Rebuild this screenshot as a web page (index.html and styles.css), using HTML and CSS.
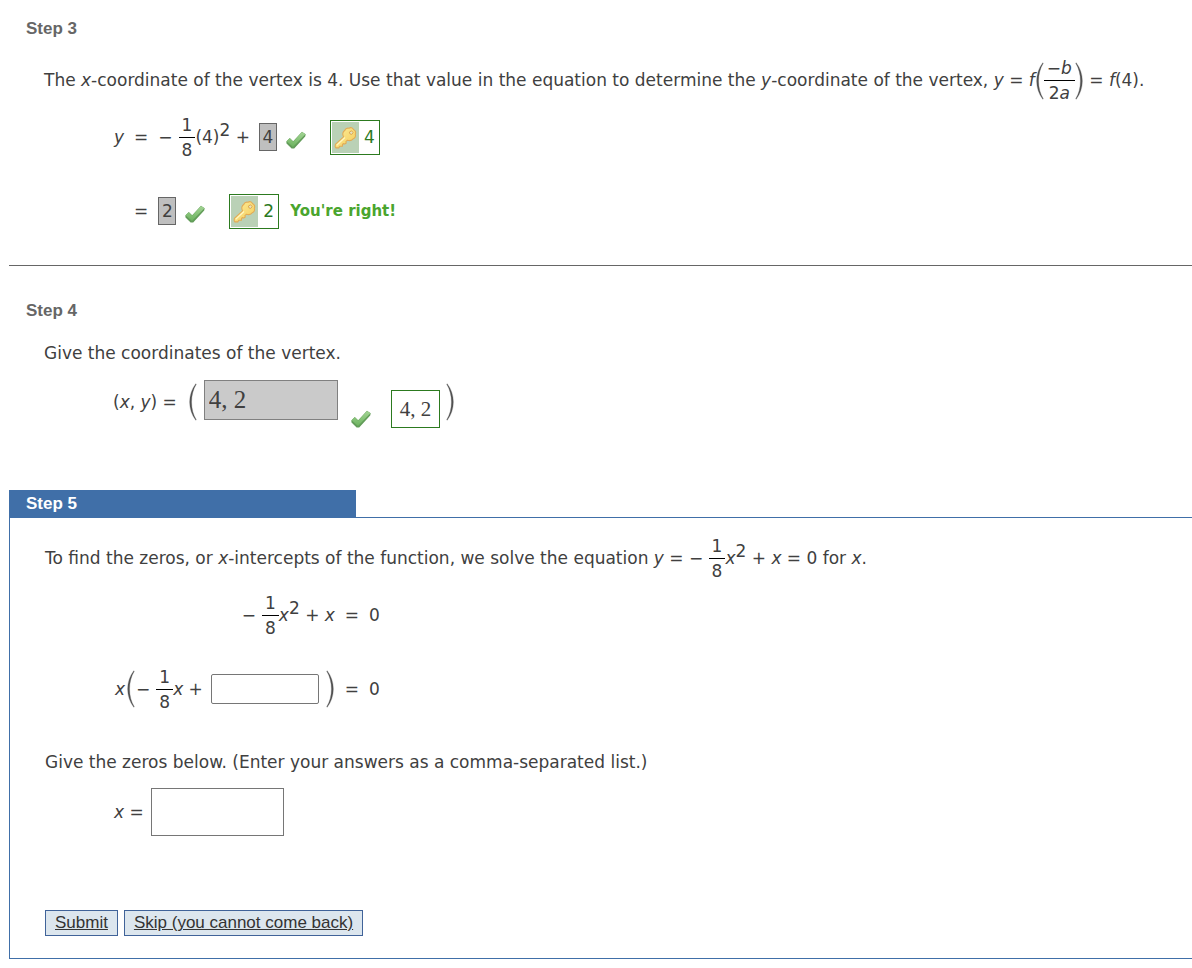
FILE: index.html
```
<!DOCTYPE html>
<html lang="en">
<head>
    <meta charset="UTF-8">
    <meta name="viewport" content="width=device-width, initial-scale=1.0">
    <title>Quadratic Function Tutorial</title>
    <link rel="stylesheet" href="styles.css">
</head>
<body>
    <svg class="sprites" aria-hidden="true">
        <defs>
            <linearGradient id="checkFill" x1="0" y1="0" x2="0" y2="1">
                <stop offset="0" stop-color="#a3d494"/>
                <stop offset="1" stop-color="#6cb35f"/>
            </linearGradient>
            <linearGradient id="keyFill" x1="0" y1="0" x2="1" y2="1">
                <stop offset="0" stop-color="#fdee9c"/>
                <stop offset="1" stop-color="#f4cb58"/>
            </linearGradient>
        </defs>
        <symbol id="check" viewBox="0 0 20 18">
            <path d="M.3 10.4 L3.8 7 L7.2 10.2 L16 .8 L19.7 3.2 L19.2 5.6 L8.2 17.6 L5.6 17.6 L.5 12.4 Z" fill="#629c59"/>
            <path d="M.6 10.2 L3.8 7.3 L7.2 10.7 L16 1.1 L19.4 3.3 L7 15.9 Z" fill="url(#checkFill)"/>
        </symbol>
        <symbol id="key" viewBox="0 0 24 24">
            <path d="M10 11.4 C8.6 8.6 9.4 5.8 11.4 4.4 C12 2.6 14 1.8 15.6 2.4 C17.2 1 19.6 1.8 20.2 3.6 C22.4 4.4 23.2 6.8 22.2 8.6 C23 10.6 22 12.8 20 13.4 C18.4 15.2 16 15.6 14 14.8 L12.4 16.2 L12.8 17.8 L11.2 18.8 L9.6 18.4 L8.8 19.4 L8.8 21 L6 21.2 L5 22.8 L2 22.8 L1.2 21.6 L1.4 19.2 Z" fill="url(#keyFill)" stroke="#e2ab55" stroke-width="1.1" stroke-linejoin="round"/>
            <path d="M2.8 20.2 L11.4 12" stroke="#fff8c4" stroke-width="1.3" fill="none"/>
            <path d="M16 6.4 L18.4 5 L20 7 L18.4 8.8 L16.6 8.2 Z" fill="#e6e2c0" stroke="#d99f48" stroke-width=".9"/>
        </symbol>
        <symbol id="paren" viewBox="0 0 9 40" preserveAspectRatio="none">
            <path d="M7.8 .8 C-.4 12 -.4 28 7.8 39.2 L8.3 38.8 C2 28 2 12 8.3 1.2 Z" fill="#505050" stroke="#606060" stroke-width=".3"/>
        </symbol>
    </svg>

    <section class="step">
        <h2>Step 3</h2>
        <p class="text tall">The <i>x</i>-coordinate of the vertex is 4. Use that value in the equation to determine the <i>y</i>-coordinate of the vertex, <i>y</i> = <i>f</i><span class="group"><svg class="paren"><use href="#paren"/></svg><span class="fraction"><span>−<i>b</i></span><span>2<i>a</i></span></span><svg class="paren close"><use href="#paren"/></svg></span> = <i>f</i>(4).</p>
        <div class="equations">
            <span class="lhs"><i>y</i></span>
            <span>=</span>
            <span class="math">
                <span>−</span>
                <span class="fraction lead"><span>1</span><span>8</span></span>
                <span>(4)<sup>2</sup> +</span>
                <input class="answered" type="text" value="4" aria-label="Constant term" readonly>
                <svg class="check"><use href="#check"/></svg>
                <span class="answer-key"><svg class="key"><use href="#key"/></svg><span>4</span></span>
            </span>
            <span></span>
            <span>=</span>
            <span class="math">
                <input class="answered first" type="text" value="2" aria-label="Value of y" readonly>
                <svg class="check"><use href="#check"/></svg>
                <span class="answer-key"><svg class="key"><use href="#key"/></svg><span>2</span></span>
                <strong class="feedback">You're right!</strong>
            </span>
        </div>
    </section>

    <section class="step divided">
        <h2>Step 4</h2>
        <p class="text">Give the coordinates of the vertex.</p>
        <div class="vertex">
            <label for="vertex">(<i>x</i>, <i>y</i>) =</label>
            <svg class="paren"><use href="#paren"/></svg>
            <input id="vertex" class="vertex-answer" type="text" value="4, 2" readonly>
            <svg class="check"><use href="#check"/></svg>
            <span class="vertex-key">4, 2</span>
            <svg class="paren close"><use href="#paren"/></svg>
        </div>
    </section>

    <section class="current">
        <h2>Step 5</h2>
        <form class="panel">
            <p class="text tall">To find the zeros, or <i>x</i>-intercepts of the function, we solve the equation <i>y</i> = − <span class="fraction"><span>1</span><span>8</span></span><i>x</i><sup>2</sup> + <i>x</i> = 0 for <i>x</i>.</p>
            <div class="equations">
                <span class="math lhs">
                    <span>−</span>
                    <span class="fraction lead"><span>1</span><span>8</span></span>
                    <span><i>x</i><sup>2</sup> + <i>x</i></span>
                </span>
                <span>=</span>
                <span>0</span>
                <span class="math lhs">
                    <i>x</i>
                    <svg class="paren"><use href="#paren"/></svg>
                    <span>−</span>
                    <span class="fraction lead"><span>1</span><span>8</span></span>
                    <label for="term"><i>x</i> +</label>
                    <input id="term" class="term" type="text">
                    <svg class="paren close"><use href="#paren"/></svg>
                </span>
                <span>=</span>
                <span>0</span>
            </div>
            <p class="text last">Give the zeros below. (Enter your answers as a comma-separated list.)</p>
            <div class="zeros">
                <label for="zeros"><i>x</i> =</label>
                <input id="zeros" type="text">
            </div>
            <div class="buttons">
                <button type="button">Submit</button>
                <button type="button">Skip (you cannot come back)</button>
            </div>
        </form>
    </section>
</body>
</html>
```
FILE: styles.css
```
* {
    box-sizing: border-box;
}
body {
    margin: 0 0 9px 9px;
    font-family: Verdana, "DejaVu Sans", sans-serif;
    font-size: 17px;
    line-height: 22px;
    color: #404040;
    background-color: #fff;
}
h2 {
    margin: 0;
    padding-left: 17px;
    font-family: Arial, "Liberation Sans", sans-serif;
    font-size: 17px;
    line-height: 22px;
    color: #666;
}
sup {
    font-size: 17px;
    line-height: 0;
    vertical-align: 7px;
}
svg {
    flex-shrink: 0;
}
input {
    font-family: inherit;
    font-size: 17px;
    color: #404040;
    background-color: #fff;
    border: 1px solid #767676;
}
.sprites {
    display: block;
    width: 0;
    height: 0;
}
.step {
    padding-top: 18px;
}
.divided {
    margin-top: 17px;
    padding-top: 34px;
    border-top: 1px solid #666;
}
.text {
    margin: 0;
    padding: 20px 0 0 35px;
}
.text.tall {
    padding-top: 16px;
}
.text.last {
    padding-top: 25px;
}
.equations {
    display: grid;
    grid-template-columns: auto auto 1fr;
    column-gap: 10px;
    align-items: center;
    margin-top: -5px;
    padding-left: 105px;
}
.lhs {
    justify-self: end;
}
.math {
    display: flex;
    align-items: center;
    height: 74px;
}
.fraction {
    display: inline-flex;
    flex-direction: column;
    align-items: center;
    vertical-align: middle;
    line-height: 24px;
}
.fraction > span {
    padding: 0 3px;
}
.fraction > span:first-child {
    border-bottom: 1px solid #000;
}
.lead {
    margin-left: 6px;
}
.group {
    display: inline-flex;
    align-items: center;
    vertical-align: middle;
}
.paren {
    width: 9px;
    height: 38px;
}
.close {
    transform: scaleX(-1);
}
.equations .paren {
    margin: 0 1px;
}
.answered {
    width: 18px;
    height: 28px;
    margin-left: 9px;
    padding: 0;
    text-align: center;
    background-color: #bfbfbf;
    border-color: #666;
}
.answered.first {
    margin-left: 0;
}
.check {
    width: 20px;
    height: 18px;
    margin: 6px 0 0 9px;
}
.answer-key {
    display: flex;
    align-items: center;
    width: 50px;
    height: 35px;
    margin-left: 24px;
    padding: 1px;
    color: #2c7a1f;
    border: 1px solid #2c7a1f;
}
.answer-key span {
    padding-left: 5px;
}
.key {
    width: 27px;
    height: 31px;
    padding: 3px 2px;
    background-color: #bad1b6;
}
.feedback {
    margin-left: 11px;
    font-size: 15px;
    color: #4aa52e;
}
.vertex {
    display: flex;
    align-items: center;
    padding: 16px 0 0 104px;
}
.vertex label {
    padding-bottom: 4px;
}
.vertex .paren {
    margin: 0 7px 4px 11px;
}
.vertex .close {
    margin-left: 6px;
}
.vertex-answer {
    align-self: flex-start;
    width: 134px;
    height: 40px;
    margin-bottom: 8px;
    padding: 0 4px;
    font-family: "Liberation Serif", serif;
    font-size: 25px;
    background-color: #cacaca;
    border-color: #808080;
}
.vertex .check {
    align-self: flex-end;
    margin-left: 13px;
}
.vertex-key {
    align-self: flex-end;
    margin-left: 20px;
    padding: 0 8px;
    font-family: "Liberation Serif", serif;
    font-size: 21px;
    line-height: 36px;
    border: 1px solid #2c7a1f;
}
.current {
    margin-top: 62px;
}
.current h2 {
    width: 347px;
    max-width: 100%;
    line-height: 27px;
    color: #fff;
    background-color: #406fa8;
}
.panel {
    padding-bottom: 22px;
    border: 1px solid #406fa8;
    border-right: 0;
}
.term {
    width: 108px;
    height: 30px;
    margin: 0 6px 0 8px;
    border-radius: 2px;
}
.equations .close {
    margin-right: 0;
}
.zeros {
    display: flex;
    align-items: center;
    padding: 15px 0 0 104px;
}
.zeros input {
    width: 133px;
    height: 48px;
    margin-left: 7px;
}
.buttons {
    display: flex;
    gap: 6px;
    margin-top: 74px;
    padding-left: 35px;
}
button {
    padding: 0 9px;
    font-family: Arial, "Liberation Sans", sans-serif;
    font-size: 17px;
    line-height: 24px;
    color: #333;
    text-decoration: underline;
    background-color: #dce6ee;
    border: 1px solid #406399;
}
```
